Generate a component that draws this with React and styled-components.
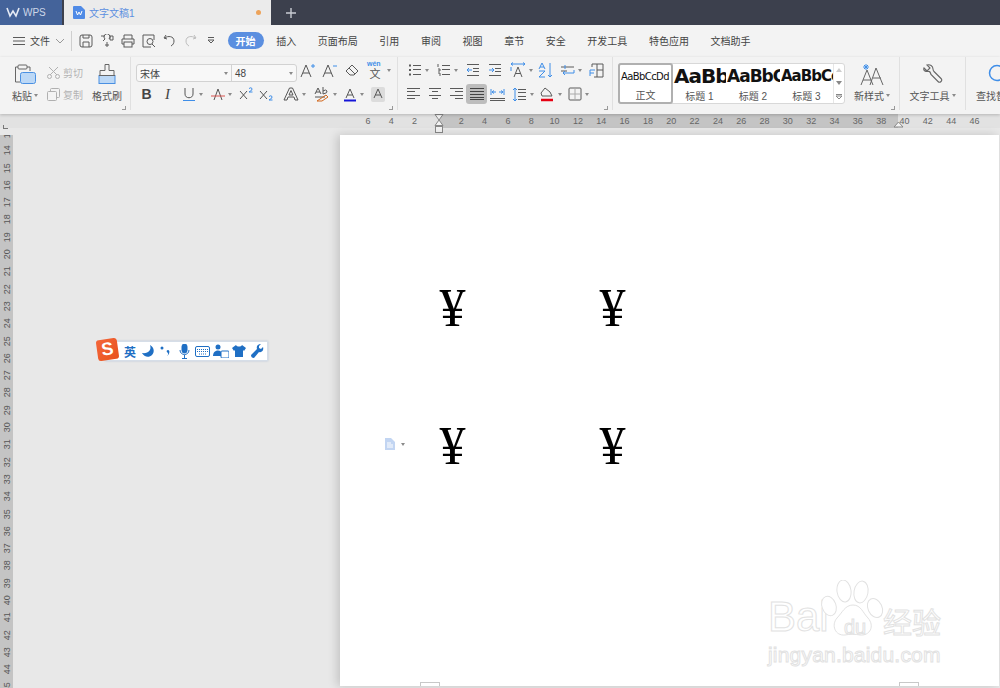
import React from 'react';
import styled, { createGlobalStyle } from 'styled-components';

const GlobalStyle = createGlobalStyle`
  html, body { margin: 0; padding: 0; height: 100%; overflow: hidden; background: #e8e8e8; }
  body { font-family: "Liberation Sans", "Noto Sans CJK SC", sans-serif; }
  #root { height: 688px; }
`;

const Shell = styled.div`
  position: relative;
  width: 1000px;
  height: 688px;
  display: flex;
  flex-direction: column;
  overflow: hidden;
  background: #e8e8e8;
`;

/* title bar */
const TitleBar = styled.div`
  height: 25px;
  background: #3c404d;
  display: flex;
  flex: none;
`;
const WpsTab = styled.div`
  width: 62px;
  background: #44639a;
  color: #cdd7e8;
  font-size: 10px;
  display: flex;
  align-items: center;
  gap: 3px;
  padding-left: 6px;
  box-sizing: border-box;
`;
const DocTab = styled.div`
  width: 207px;
  margin-left: 2px;
  background: #ebebeb;
  color: #5b8fe0;
  font-size: 10px;
  display: flex;
  align-items: center;
  gap: 4px;
  padding-left: 9px;
  box-sizing: border-box;
`;
const Dot = styled.span`
  width: 5px;
  height: 5px;
  border-radius: 50%;
  background: #eda35a;
  margin-left: auto;
  margin-right: 10px;
`;
const AddTab = styled.div`
  margin-left: 14px;
  display: flex;
  align-items: center;
`;

/* menu row */
const MenuBar = styled.div`
  height: 32px;
  flex: none;
  background: #f3f3f3;
  display: flex;
  align-items: center;
  font-size: 10px;
  color: #444;
  padding: 0 0 1px 13px;
  box-sizing: border-box;
`;
const FileMenu = styled.div`
  display: flex;
  align-items: center;
  gap: 5px;
  width: 58px;
  height: 20px;
  border-right: 1px solid #cfcfcf;
  margin-right: 4px;
`;
const QuickBtn = styled.div`
  width: 20.8px;
  display: flex;
  justify-content: center;
`;
const MenuTabs = styled.div`
  display: flex;
  align-items: center;
  gap: 21.6px;
  margin-left: 6px;
`;
const MenuTab = styled.div`
  ${p => p.$active ? `
    background: #5b8fe0;
    color: #fff;
    font-weight: bold;
    height: 17px;
    width: 36px;
    border-radius: 9px;
    display: flex;
    align-items: center;
    justify-content: center;
    margin-right: -9px;
  ` : ''}
`;

/* ribbon */
const Ribbon = styled.div`
  height: 57px;
  flex: none;
  background: #f3f3f3;
  display: flex;
  box-shadow: 0 1px 3px rgba(0, 0, 0, 0.2);
  position: relative;
  z-index: 2;
  font-size: 10px;
  color: #555;
`;
const Group = styled.div`
  position: relative;
  width: ${p => p.$w}px;
  flex: none;
  box-sizing: border-box;
  border-right: 1px solid #e0e0e0;
  margin-bottom: 4px;
  padding: ${p => p.$pad || '0'};
  display: flex;
  flex-direction: ${p => p.$col ? 'column' : 'row'};
`;
const Launcher = styled.span`
  position: absolute;
  right: 4px;
  bottom: 0;
  width: 3px;
  height: 3px;
  border-right: 1px solid #999;
  border-bottom: 1px solid #999;
`;
const BigCol = styled.div`
  width: ${p => p.$w || 44}px;
  height: 45px;
  flex: none;
  display: flex;
  flex-direction: column;
  align-items: center;
  justify-content: space-between;
  padding-top: 7px;
  box-sizing: border-box;
  white-space: nowrap;
`;
const BigLabel = styled.div`
  display: flex;
  align-items: center;
  gap: 2px;
  height: 14px;
`;
const SmallCol = styled.div`
  width: 38px;
  flex: none;
  display: flex;
  flex-direction: column;
  gap: 7px;
  padding-top: 8px;
  color: #b4b4b4;
`;
const SmallRow = styled.div`
  display: flex;
  align-items: center;
  gap: 3px;
`;
const ToolRow = styled.div`
  height: ${p => p.$h || 22}px;
  display: flex;
  align-items: center;
`;
const Tool = styled.div`
  width: ${p => p.$w || 21}px;
  height: 20px;
  flex: none;
  display: flex;
  align-items: center;
  justify-content: center;
  gap: 3px;
  border-radius: 3px;
  background: ${p => p.$on ? '#bdbdbd' : 'transparent'};
`;
const BoldGlyph = styled.b`
  font-size: 14px;
  color: #444;
`;
const ItalicGlyph = styled.i`
  font-size: 15px;
  font-family: "Liberation Serif", serif;
  color: #444;
`;
const Caret = styled.span`
  width: 0;
  height: 0;
  flex: none;
  border-left: 2.5px solid transparent;
  border-right: 2.5px solid transparent;
  border-top: 3px solid #8a8a8a;
`;
const FontBox = styled.div`
  width: 161px;
  height: 18px;
  margin: 6px 0 0;
  display: flex;
  flex: none;
  box-sizing: border-box;
  border: 1px solid #d2d2d2;
  border-radius: 3px;
  background: #f8f8f8;
  color: #444;
  font-size: 10px;
`;
const FontField = styled.div`
  width: ${p => p.$w}px;
  display: flex;
  align-items: center;
  justify-content: space-between;
  padding: 0 3px 0 ${p => p.$left}px;
  box-sizing: border-box;
  border-right: ${p => p.$split ? '1px solid #d2d2d2' : '0'};
`;

/* style gallery */
const Gallery = styled.div`
  width: 227px;
  height: 41px;
  margin: 6px 0 0 5px;
  box-sizing: border-box;
  border: 1px solid #d8d8d8;
  border-radius: 3px;
  background: #fff;
  display: flex;
  flex: none;
`;
const StyleCard = styled.div`
  width: ${p => p.$w}px;
  flex: none;
  overflow: hidden;
  box-sizing: border-box;
  border: ${p => p.$on ? '2px solid #b0b0b0' : '0'};
  border-radius: 3px;
  margin: ${p => p.$on ? '-1px 0 -1px -1px' : '0'};
  display: flex;
  flex-direction: column;
  align-items: center;
  color: #555;
`;
const Sample = styled.div`
  height: 25px;
  align-self: flex-start;
  padding-left: 1px;
  display: flex;
  align-items: center;
  font-family: "DejaVu Sans", sans-serif;
  font-size: ${p => p.$size}px;
  font-weight: ${p => p.$size > 11 ? 'bold' : 'normal'};
  color: #111;
  white-space: nowrap;
  letter-spacing: ${p => p.$size > 11 ? -1 : -0.6}px;
`;
const GalleryScroll = styled.div`
  margin-left: auto;
  width: 10px;
  border-left: 1px solid #e6e6e6;
  display: flex;
  flex-direction: column;
  align-items: center;
  justify-content: space-around;
`;

/* rulers */
const HRuler = styled.div`
  position: relative;
  height: 14px;
  flex: none;
  background: linear-gradient(to right, #e2e2e2 439px, #c4c4c4 439px, #c4c4c4 898px, #e2e2e2 898px);
  display: flex;
  padding-left: 356.3px;
  color: #666;
  font-size: 9px;
  line-height: 14px;
`;
const HTick = styled.span`
  width: 23.33px;
  flex: none;
  text-align: center;
`;
const Marker = styled.svg`
  position: absolute;
  left: ${p => p.$x}px;
  top: 0;
`;
const TabCorner = styled.span`
  position: absolute;
  left: 3px;
  top: 11px;
  width: 4px;
  height: 3px;
  border-left: 1px solid #777;
  border-bottom: 1px solid #777;
`;
const Workspace = styled.div`
  flex: 1;
  display: flex;
  min-height: 0;
  padding-top: 7px;
`;
const VRuler = styled.div`
  width: 13px;
  flex: none;
  background: #c4c4c4;
  overflow: hidden;
  color: #555;
  font-size: 9px;
`;
const VList = styled.div`
  margin-top: -10px;
  display: flex;
  flex-direction: column;
`;
const VTick = styled.span`
  height: 17.3px;
  flex: none;
  display: flex;
  align-items: center;
  justify-content: center;
  writing-mode: vertical-rl;
  transform: rotate(180deg);
`;

/* page */
const Page = styled.div`
  position: relative;
  width: 659px;
  height: 551px;
  margin-left: 327px;
  background: #fff;
  box-shadow: -3px 0 9px rgba(0, 0, 0, 0.16);
  display: flex;
  flex-direction: column;
`;
const YenGrid = styled.div`
  display: grid;
  grid-template-columns: repeat(2, 160px);
  grid-auto-rows: 138px;
  padding: 137px 0 0 100px;
`;
const Yen = styled.div`
  width: 25px;
  height: 70px;
  display: flex;
  align-items: center;
  justify-content: center;
  font-family: "Liberation Serif", serif;
  font-size: 52px;
  color: #000;
  transform: scaleY(1.06);
`;
const DocMark = styled.div`
  position: absolute;
  left: 44px;
  top: 303px;
  display: flex;
  align-items: center;
  gap: 5px;
`;
const MarginMarks = styled.div`
  margin-top: auto;
  display: flex;
  justify-content: space-between;
  padding: 0 80px;
`;
const MarginMark = styled.span`
  width: 20px;
  height: 4px;
  border: 1px solid #c8c8c8;
  border-bottom: 0;
  box-sizing: border-box;
`;

/* watermark */
const Watermark = styled.div`
  position: absolute;
  left: 428px;
  top: 445px;
  width: 190px;
  height: 92px;
  color: #fff;
  -webkit-text-stroke: 1px #e2e2e2;
  user-select: none;
`;
const MarkTop = styled.div`
  display: flex;
  align-items: flex-end;
  height: 60px;
  font-size: 42px;
  line-height: 46px;
  white-space: nowrap;
`;
const MarkBai = styled.span`
  width: 115px;
  flex: none;
`;
const MarkCjk = styled.span`
  font-size: 29px;
  line-height: 38px;
  font-family: "Noto Sans CJK SC", sans-serif;
`;
const Paw = styled.svg`
  position: absolute;
  left: 52px;
  top: 0;
`;
const MarkDu = styled.span`
  position: absolute;
  left: 76px;
  top: 36px;
  font-size: 20px;
  line-height: 22px;
`;
const MarkUrl = styled.div`
  font-size: 21px;
  line-height: 24px;
  margin-top: 3px;
  letter-spacing: 0.2px;
  white-space: nowrap;
`;

/* input method bar */
const ImeBar = styled.div`
  position: absolute;
  left: 105px;
  top: 341px;
  width: 163px;
  height: 20px;
  box-sizing: border-box;
  background: #fff;
  border: 1px solid #d6dee8;
  box-shadow: 0 0 2px rgba(90, 130, 190, 0.35);
  display: flex;
  align-items: center;
  padding-left: 15px;
  color: #1f6fc4;
  font-size: 12px;
  font-weight: bold;
`;
const ImeSlot = styled.span`
  width: 18.2px;
  flex: none;
  display: flex;
  align-items: center;
  justify-content: center;
`;
const ImeLogo = styled.div`
  position: absolute;
  left: 97px;
  top: 339px;
  width: 21px;
  height: 21px;
  border-radius: 3px;
  transform: rotate(-8deg);
  background: linear-gradient(135deg, #f4663a, #e8521c);
  color: #fff;
  font-size: 18px;
  font-weight: bold;
  line-height: 21px;
  text-align: center;
`;

const BLUE = '#3f8ee8';

const I = ({ s = 16, w, h, children }) => (
  <svg width={w || s} height={h || s} viewBox={`0 0 ${w || s} ${h || s}`} fill="none" stroke="#5a5a5a" strokeWidth="1">
    {children}
  </svg>
);

const lines = (arr, color) => arr.map(([x1, x2, y], i) => (
  <path key={i} d={`M${x1} ${y}.5H${x2}`} stroke={color || '#5a5a5a'} />
));

const IconBullet = () => <I s={14}><path d="M1 2.5h2M1 7h2M1 11.5h2" strokeWidth="2" />{lines([[5, 13, 2], [5, 13, 6], [5, 13, 11]])}</I>;
const IconNumber = () => <I s={14}><path d="M1 1v3M1 6h2v2H1M1 10h2v3" />{lines([[5, 13, 2], [5, 13, 6], [5, 13, 11]])}</I>;
const IconIndent = ({ out }) => (
  <I s={14}>
    {lines([[1, 13, 1], [7, 13, 5], [7, 13, 8], [1, 13, 12]])}
    <path d={out ? 'M1 7h5M3 5L1 7l2 2' : 'M1 7h5M4 5l2 2-2 2'} stroke={BLUE} />
  </I>
);
const IconCharSpace = () => (
  <I s={16}>
    <path d="M4 15L8 5l4 10M5.5 11.5h5" />
    <path d="M1 2h14M3 0.5L1 2l2 1.5M13 0.5L15 2l-2 1.5M1 5v4" stroke={BLUE} />
  </I>
);
const IconSort = () => (
  <I s={16}>
    <path d="M1 7l3-6 3 6M2 5h4" stroke={BLUE} />
    <path d="M1 9h6L1 15h6M12 1v14M10 13l2 2 2-2" stroke={BLUE} />
  </I>
);
const IconSwap = () => (
  <I s={15}>
    <path d="M1 4h13M1 8h6" />
    <path d="M5 2v4M14 7v3H3M5 8l-2 2 2 2" stroke={BLUE} />
  </I>
);
const IconTableText = () => (
  <I s={15}>
    <path d="M3 1h11v13H5M8 1v13M8 7h6M3 1v3" />
    <path d="M1 7h5M1 7v6M1 10h4" stroke={BLUE} />
  </I>
);
const IconAlign = ({ rows }) => <I s={14}>{lines(rows)}</I>;
const IconJustify = () => <I s={14}>{lines([[0, 14, 1], [0, 14, 4], [0, 14, 7], [0, 14, 10], [0, 14, 12]], '#444')}</I>;
const IconDistribute = () => (
  <I s={15}>
    {lines([[0, 15, 11], [0, 15, 13]])}
    <path d="M1 2v6M14 2v6M2 5h4M9 5h4M4 3.5L2 5l2 1.5M11 3.5L13 5l-2 1.5" stroke={BLUE} />
  </I>
);
const IconLineSpace = () => (
  <I s={15}>
    {lines([[6, 14, 2], [6, 14, 5], [6, 14, 9], [6, 14, 12]])}
    <path d="M3 1v13M1 3l2-2 2 2M1 12l2 2 2-2" stroke={BLUE} />
  </I>
);
const IconFill = () => (
  <I s={15}>
    <path d="M5 1l5 4 2 4H2L1 6z" />
    <path d="M1 13h12" stroke="#e60012" strokeWidth="2.5" />
  </I>
);
const IconBorders = () => <I s={14}><rect x="1" y="1" width="12" height="12" rx="1" /><path d="M7 1v12M1 7h12" stroke="#aaa" /></I>;

const IconA = ({ bar, box }) => (
  <svg width="14" height="15" viewBox="0 0 14 15" fill="none" stroke="#555">
    {box && <rect x="0" y="0" width="14" height="15" rx="2" fill="#dcdcdc" stroke="none" />}
    <path d="M3 11L7 2l4 9M4.4 8h5.2" />
    {bar && <path d="M1 13.5h12" stroke={bar} strokeWidth="2" />}
  </svg>
);
const IconScript = ({ sup }) => (
  <svg width="15" height="14" viewBox="0 0 15 14" fill="none" stroke="#555">
    <path d="M1 4l7 8M8 4l-7 8" />
    <path d={sup ? 'M10 1.5q2-1.5 3 0t-3 3.5h3.5' : 'M10 9.5q2-1.5 3 0t-3 3.5h3.5'} stroke={BLUE} />
  </svg>
);
const IconOutlineA = () => (
  <svg width="16" height="14" viewBox="0 0 16 14" fill="none" stroke="#555">
    <path d="M1 13L6.5 1h3L15 13h-3l-1-3H5l-1 3zM6 8h4L8 3.5z" />
  </svg>
);
const IconHighlight = () => (
  <svg width="16" height="16" viewBox="0 0 16 16" fill="none" stroke="#555">
    <path d="M1 8l3-6 3 6M2 6h4M9 1v7M9 5q3-2 4 0t-4 3" />
    <path d="M1 11h10" />
    <path d="M3 15l9-6 2 2-6 4z" stroke="#d2691e" />
  </svg>
);
const IconEraser = () => (
  <I s={14}><path d="M1 8l6-6 6 6-4 4H5zM4 5l6 6" /></I>
);
const IconPinyin = () => (
  <svg width="18" height="20" viewBox="0 0 18 20" fill="none">
    <text x="1" y="6" fontSize="7" fontWeight="bold" fill={BLUE} fontFamily="Liberation Sans">wén</text>
    <text x="3.500" y="18" fontSize="11" fill="#555" fontFamily="Noto Sans CJK SC">文</text>
  </svg>
);
const IconGrow = ({ minus }) => (
  <svg width="16" height="15" viewBox="0 0 16 15" fill="none" stroke="#555">
    <path d="M1 14L6 2l5 12M3 10h6" />
    <path d={minus ? 'M11 3h4' : 'M11 3h4M13 1v4'} stroke={BLUE} />
  </svg>
);
const IconUnderline = () => (
  <svg width="14" height="15" viewBox="0 0 14 15" fill="none" stroke="#555">
    <path d="M3 1v6c0 5 8 5 8 0V1" />
    <path d="M1 13.5h12" stroke={BLUE} />
  </svg>
);
const IconStrike = () => (
  <svg width="14" height="15" viewBox="0 0 14 15" fill="none" stroke="#555">
    <path d="M3 13L7 2l4 11" />
    <path d="M0 9h14" stroke="#d9534f" />
  </svg>
);

const IconPaste = () => (
  <svg width="22" height="21" viewBox="0 0 22 21" fill="none" stroke="#666">
    <path d="M4 3H1.500v15H6M13 3h3v4" />
    <rect x="4" y="1" width="9" height="4" rx="1" />
    <rect x="6.500" y="8.500" width="15" height="11" rx="2" fill="#bcd8f6" stroke="#4a90e2" />
  </svg>
);
const IconCut = () => (
  <I s={13}><path d="M2 1l8 8M11 1L3 9" stroke="#b0b0b0" /><circle cx="2.5" cy="10.5" r="2" stroke="#b0b0b0" /><circle cx="10.5" cy="10.5" r="2" stroke="#b0b0b0" /></I>
);
const IconCopy = () => (
  <I s={13}><rect x="3.5" y="0.5" width="9" height="9" stroke="#b0b0b0" rx="1" /><rect x="0.5" y="3.5" width="9" height="9" fill="#f3f3f3" stroke="#b0b0b0" rx="1" /></I>
);
const IconBrush = () => (
  <svg width="20" height="21" viewBox="0 0 20 21" fill="none" stroke="#666">
    <path d="M8 0.500h4v6h5v5H3v-5h5z" />
    <rect x="2" y="11.500" width="16" height="8" fill="#bcd8f6" stroke="#4a90e2" />
    <path d="M2 11.500h16" stroke="#666" />
  </svg>
);
const IconNewStyle = () => (
  <svg width="24" height="22" viewBox="0 0 24 22" fill="none" stroke="#666">
    <path d="M1 21L7 6l6 15M3 16h8M10 21L16 4l7 17M13 14h8" />
    <path d="M6 0v6M3 3h6M4 1l4 4M8 1L4 5" stroke={BLUE} />
  </svg>
);
const IconWrench = () => (
  <svg width="20" height="20" viewBox="0 0 20 20" fill="none" stroke="#666" strokeWidth="1.100">
    <path d="M1 4l3 3 3-3-3-3c3-1 6 1 6 4 0 1 0 1.500 1 2.500l7 7c1 1 1 2 0 3s-2 1-3 0l-7-7C7 6.500 6 7.500 5 7.500c-3 0-5-1-4-3.500z" />
  </svg>
);
const IconFind = () => (
  <svg width="20" height="20" viewBox="0 0 20 20" fill="none" stroke={BLUE} strokeWidth="1.500">
    <circle cx="11" cy="9" r="7.500" />
  </svg>
);

const Q = {
  save: <I s={14}><rect x="1" y="1" width="12" height="12" rx="2" /><path d="M4 1v3h6V1M4 13V8h6v5" /></I>,
  saveAs: <I s={14}><path d="M1 2h4M9 5a3 3 0 1 0-4 0l-2 2M7 8v5M10 2h3v4h-3zM5 11h4" /></I>,
  print: <I s={14}><path d="M3 5V1h8v4M3 10H1V5h12v5h-2" /><rect x="3" y="8" width="8" height="5" /></I>,
  preview: <I s={14}><path d="M9 13H1V1h11v5" /><circle cx="8" cy="7.5" r="3" /><path d="M10 10l3 3" /></I>,
  undo: <I s={13}><path d="M3 1L1 4l3 1M1.500 4C5 1.500 11 2 11 7c0 2-1 4-3 5" /></I>,
  redo: <I s={13}><path d="M10 1l2 3-3 1M11.500 4C8 1.500 2 2 2 7c0 2 1 4 3 5" stroke="#bdbdbd" /></I>,
  more: <I s={10}><path d="M2 1.5h6M2 4l3 3 3-3z" /></I>,
};

const ime = [
  <svg width="14" height="14" viewBox="0 0 14 14" fill="#1f6fc4"><path d="M9 1c2 5-2 9-8 8 2 4 7 5 10 2s2-8-2-10z" /></svg>,
  <svg width="14" height="14" viewBox="0 0 14 14" fill="#1f6fc4"><circle cx="3" cy="4" r="1.500" /><path d="M9 6c2 0 2 4-1 6 2-2 1-3 0-4s0-2 1-2z" /></svg>,
  <svg width="15" height="15" viewBox="0 0 15 15" fill="none" stroke="#1f6fc4"><rect x="5" y="0" width="5" height="9" rx="2.500" fill="#1f6fc4" /><path d="M3 6c0 6 9 6 9 0M7.500 11v3M5 14.500h5" /></svg>,
  <svg width="15" height="11" viewBox="0 0 15 11" fill="none" stroke="#1f6fc4"><rect x="0.500" y="0.500" width="14" height="10" rx="1.500" /><path d="M2 3.500h11M2 5.500h11M4 8h7" strokeDasharray="1 1" /></svg>,
  <svg width="16" height="14" viewBox="0 0 16 14" fill="#1f6fc4"><circle cx="5" cy="3" r="2.500" /><path d="M0 12c0-7 9-7 9-2v2z" /><rect x="8" y="7" width="8" height="7" rx="1" fill="#fff" stroke="#1f6fc4" /></svg>,
  <svg width="14" height="14" viewBox="0 0 14 14" fill="#1f6fc4"><path d="M4 1L0 4l2 3 1-1v7h8V6l1 1 2-3-4-3c-1 2-5 2-6 0z" /></svg>,
  <svg width="13" height="14" viewBox="0 0 13 14" fill="#1f6fc4"><path d="M12 3l-2 2-2-1V2l2-2C7 0 5 2 6 5l-6 6c0 2 1 3 3 3l5-6c3 1 5-2 4-5z" /></svg>,
];

const rulerNums = [6, 4, 2, '', 2, 4, 6, 8, 10, 12, 14, 16, 18, 20, 22, 24, 26, 28, 30, 32, 34, 36, 38, 40, 42, 44, 46];
const sideNums = Array.from({ length: 33 }, (_, i) => i + 13);
const tabs = ['插入', '页面布局', '引用', '审阅', '视图', '章节', '安全', '开发工具', '特色应用', '文档助手'];

function App() {
  return (
    <Shell>
      <GlobalStyle />
      <TitleBar>
        <WpsTab>
          <svg width="14" height="11" viewBox="0 0 14 11" fill="none" stroke="#e6ebf5" strokeWidth="1.600">
            <path d="M1 1l3 8 3-5 3 5 3-8" />
          </svg>
          WPS
        </WpsTab>
        <DocTab>
          <svg width="12" height="13" viewBox="0 0 12 13">
            <path d="M1 0h7l4 4v8a1 1 0 0 1-1 1H1a1 1 0 0 1-1-1V1a1 1 0 0 1 1-1z" fill="#4f8ae6" />
            <path d="M3 5l1.500 4L6 6l1.500 3L9 5" fill="none" stroke="#fff" />
          </svg>
          文字文稿1
          <Dot />
        </DocTab>
        <AddTab>
          <svg width="12" height="12" viewBox="0 0 12 12" stroke="#c9ccd3" strokeWidth="1.400">
            <path d="M6 1v10M1 6h10" />
          </svg>
        </AddTab>
      </TitleBar>

      <MenuBar>
        <FileMenu>
          <I w={12} h={10}><path d="M0 1.5h12M0 5h12M0 8.500h12" /></I>
          文件
          <I w={10} h={6}><path d="M1 1l4 4 4-4" stroke="#999" /></I>
        </FileMenu>
        <QuickBtn>{Q.save}</QuickBtn>
        <QuickBtn>{Q.saveAs}</QuickBtn>
        <QuickBtn>{Q.print}</QuickBtn>
        <QuickBtn>{Q.preview}</QuickBtn>
        <QuickBtn>{Q.undo}</QuickBtn>
        <QuickBtn>{Q.redo}</QuickBtn>
        <QuickBtn>{Q.more}</QuickBtn>
        <MenuTabs>
          <MenuTab $active>开始</MenuTab>
          {tabs.map(t => <MenuTab key={t}>{t}</MenuTab>)}
        </MenuTabs>
      </MenuBar>

      <Ribbon>
        <Group $w={131} $pad="0 0 0 3px">
          <BigCol>
            <IconPaste />
            <BigLabel>粘贴<Caret /></BigLabel>
          </BigCol>
          <SmallCol>
            <SmallRow><IconCut />剪切</SmallRow>
            <SmallRow><IconCopy />复制</SmallRow>
          </SmallCol>
          <BigCol>
            <IconBrush />
            <BigLabel>格式刷</BigLabel>
          </BigCol>
          <Launcher />
        </Group>

        <Group $w={267} $col $pad="0 0 0 5px">
          <ToolRow $h={26}>
            <FontBox>
              <FontField $w={95} $left={3} $split>宋体<Caret /></FontField>
              <FontField $w={64} $left={3}>48<Caret /></FontField>
            </FontBox>
            <Tool $w={22}><IconGrow /></Tool>
            <Tool $w={22}><IconGrow minus /></Tool>
            <Tool $w={22}><IconEraser /></Tool>
            <Tool $w={30}><IconPinyin /><Caret /></Tool>
          </ToolRow>
          <ToolRow>
            <Tool><BoldGlyph>B</BoldGlyph></Tool>
            <Tool><ItalicGlyph>I</ItalicGlyph></Tool>
            <Tool $w={29}><IconUnderline /><Caret /></Tool>
            <Tool $w={29}><IconStrike /><Caret /></Tool>
            <Tool $w={20}><IconScript sup /></Tool>
            <Tool $w={21}><IconScript /></Tool>
            <Tool $w={34}><IconOutlineA /><Caret /></Tool>
            <Tool $w={28}><IconHighlight /><Caret /></Tool>
            <Tool $w={28}><IconA bar="#1515d8" /><Caret /></Tool>
            <Tool $w={21}><IconA box /></Tool>
          </ToolRow>
          <Launcher />
        </Group>

        <Group $w={215} $col $pad="0 0 0 5px">
          <ToolRow $h={26}>
            <Tool $w={30}><IconBullet /><Caret /></Tool>
            <Tool $w={29}><IconNumber /><Caret /></Tool>
            <Tool $w={22}><IconIndent out /></Tool>
            <Tool $w={22}><IconIndent /></Tool>
            <Tool $w={30}><IconCharSpace /><Caret /></Tool>
            <Tool $w={20}><IconSort /></Tool>
            <Tool $w={30}><IconSwap /><Caret /></Tool>
            <Tool $w={20}><IconTableText /></Tool>
          </ToolRow>
          <ToolRow>
            <Tool><IconAlign rows={[[0, 13, 1], [0, 8, 4], [0, 13, 8], [0, 8, 11]]} /></Tool>
            <Tool><IconAlign rows={[[1, 13, 1], [4, 10, 4], [1, 13, 8], [4, 10, 11]]} /></Tool>
            <Tool><IconAlign rows={[[1, 14, 1], [6, 14, 4], [1, 14, 8], [6, 14, 11]]} /></Tool>
            <Tool $on><IconJustify /></Tool>
            <Tool><IconDistribute /></Tool>
            <Tool $w={30}><IconLineSpace /><Caret /></Tool>
            <Tool $w={26}><IconFill /><Caret /></Tool>
            <Tool $w={28}><IconBorders /><Caret /></Tool>
          </ToolRow>
          <Launcher />
        </Group>

        <Group $w={287}>
          <Gallery>
            <StyleCard $w={55} $on><Sample $size={10}>AaBbCcDd</Sample>正文</StyleCard>
            <StyleCard $w={53}><Sample $size={20}>AaBb</Sample>标题 1</StyleCard>
            <StyleCard $w={54}><Sample $size={17}>AaBbC</Sample>标题 2</StyleCard>
            <StyleCard $w={53}><Sample $size={15}>AaBbCc</Sample>标题 3</StyleCard>
            <GalleryScroll>
              <I w={6} h={4}><path d="M0 4l3-4 3 4z" fill="#ccc" stroke="none" /></I>
              <I w={6} h={4}><path d="M0 0l3 4 3-4z" fill="#888" stroke="none" /></I>
              <I w={6} h={5}><path d="M0 0.5h6M0 2l3 3 3-3z" stroke="#888" /></I>
            </GalleryScroll>
          </Gallery>
          <BigCol $w={54}>
            <IconNewStyle />
            <BigLabel>新样式<Caret /></BigLabel>
          </BigCol>
          <Launcher />
        </Group>

        <Group $w={66}>
          <BigCol $w={65}>
            <IconWrench />
            <BigLabel>文字工具<Caret /></BigLabel>
          </BigCol>
        </Group>
        <Group $w={40} $pad="0 0 0 8px">
          <BigCol $w={44}>
            <IconFind />
            <BigLabel>查找替换</BigLabel>
          </BigCol>
        </Group>
      </Ribbon>

      <HRuler>
        {rulerNums.map((n, i) => <HTick key={i}>{n}</HTick>)}
        <TabCorner />
        <Marker $x={434} width="10" height="19" viewBox="0 0 10 19" fill="#f3f3f3" stroke="#888">
          <path d="M1 0.5h8L5 6zM5 6l4 5.500H1z" />
          <rect x="1.5" y="12.5" width="7" height="6" />
        </Marker>
        <Marker $x={893} width="11" height="14" viewBox="0 0 11 14" fill="#f3f3f3" stroke="#888">
          <path d="M5.500 8l4.500 5H1z" />
        </Marker>
      </HRuler>

      <Workspace>
        <VRuler>
          <VList>
            {sideNums.map(n => <VTick key={n}>{n}</VTick>)}
          </VList>
        </VRuler>
        <Page>
          <YenGrid>
            <Yen>¥</Yen><Yen>¥</Yen><Yen>¥</Yen><Yen>¥</Yen>
          </YenGrid>
          <DocMark>
            <svg width="12" height="12" viewBox="0 0 12 12">
              <path d="M1 0h6l4 4v8H1z" fill="#c2d5f2" />
              <path d="M3 5h4M3 7h6M3 9h6" stroke="#fff" />
            </svg>
            <Caret />
          </DocMark>
          <MarginMarks>
            <MarginMark />
            <MarginMark />
          </MarginMarks>
          <Watermark>
            <Paw width="66" height="62" viewBox="0 0 66 62" fill="#fff" stroke="#e2e2e2">
              <ellipse cx="9" cy="26" rx="7" ry="10" transform="rotate(-20 9 26)" />
              <ellipse cx="24" cy="11" rx="7" ry="11" transform="rotate(-8 24 11)" />
              <ellipse cx="41" cy="12" rx="7" ry="11" transform="rotate(10 41 12)" />
              <ellipse cx="55" cy="28" rx="7" ry="10" transform="rotate(-25 55 28)" />
              <path d="M33 25c8 0 10 8 15 13 7 8 2 18-8 17-5-1-10-1-15 0-10 1-14-10-8-17 5-5 8-13 16-13z" />
            </Paw>
            <MarkDu>du</MarkDu>
            <MarkTop><MarkBai>Bai</MarkBai><MarkCjk>经验</MarkCjk></MarkTop>
            <MarkUrl>jingyan.baidu.com</MarkUrl>
          </Watermark>
        </Page>
      </Workspace>

      <ImeBar>
        <ImeSlot>英</ImeSlot>
        {ime.map((icon, i) => <ImeSlot key={i}>{icon}</ImeSlot>)}
      </ImeBar>
      <ImeLogo>S</ImeLogo>
    </Shell>
  );
}

export default App;
